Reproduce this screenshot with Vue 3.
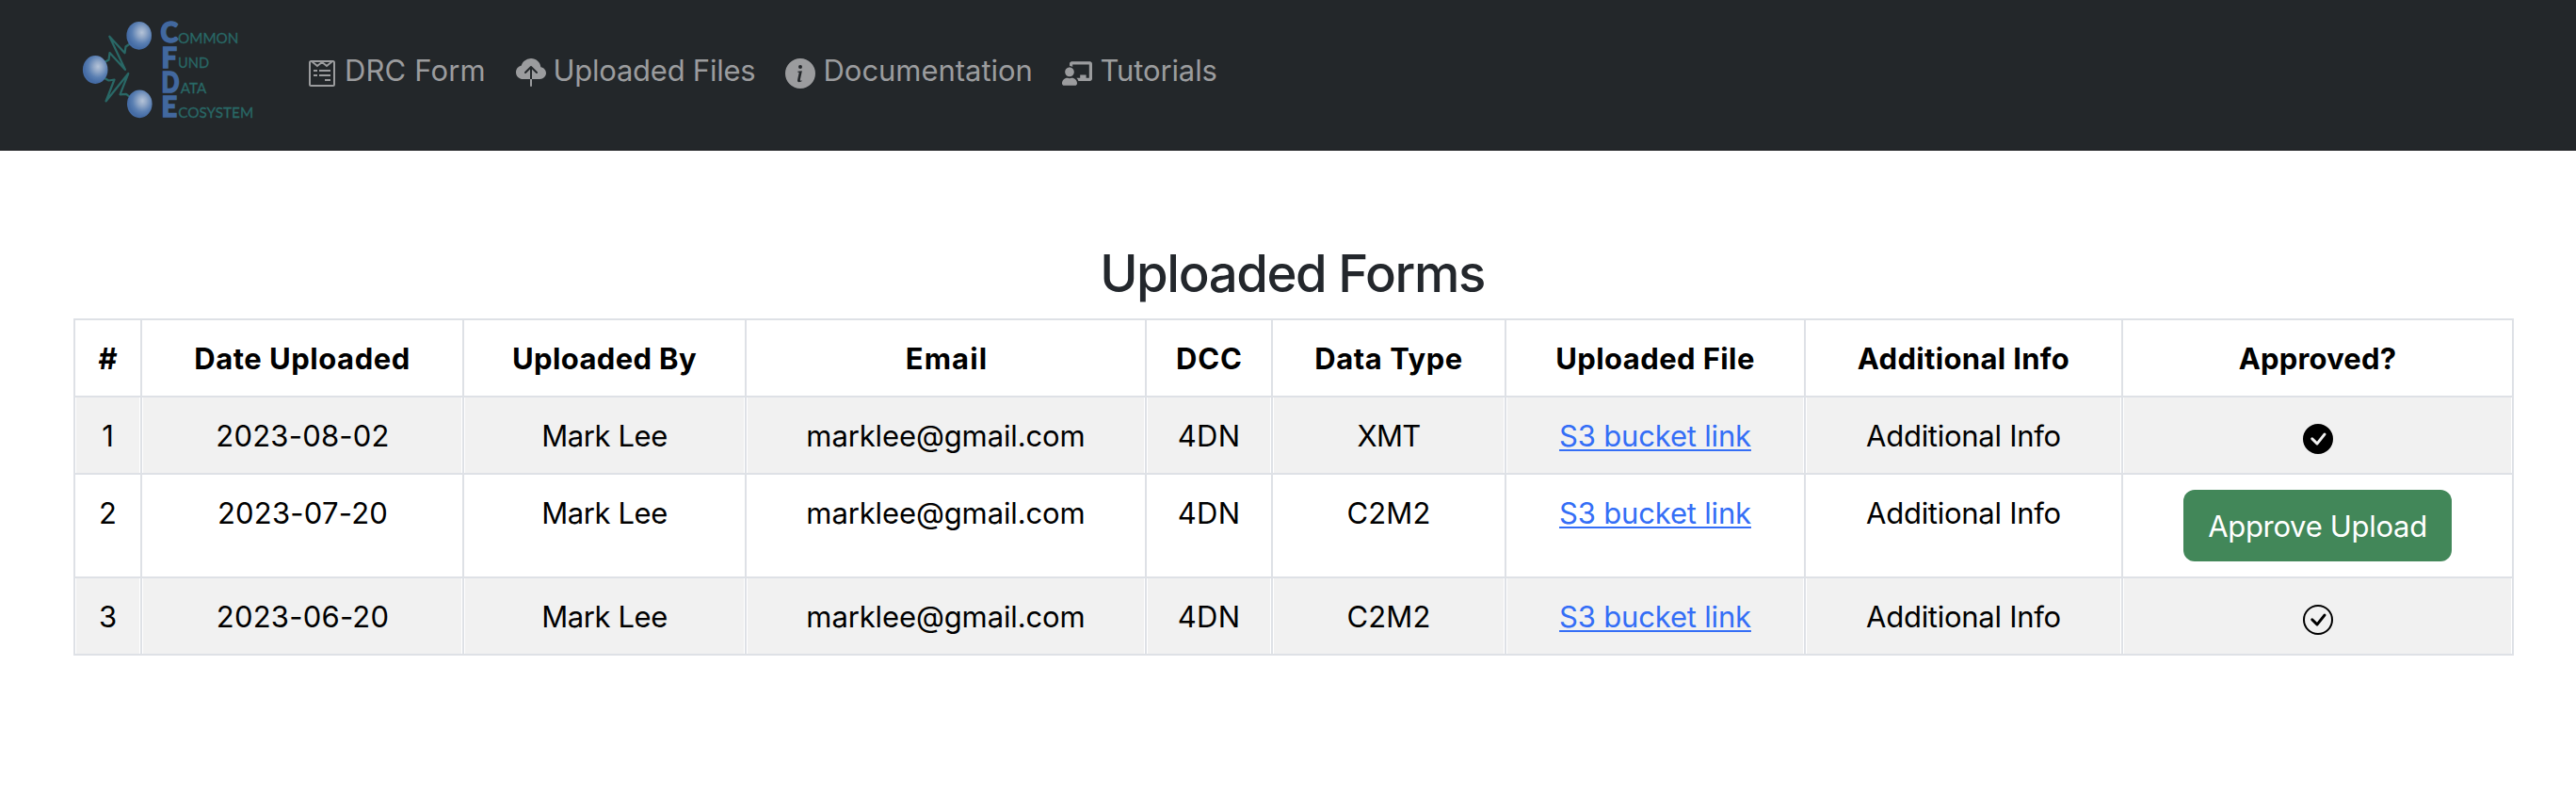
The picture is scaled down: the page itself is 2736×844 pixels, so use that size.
<script setup>
const navItems = [
  { key: 'form', label: 'DRC Form' },
  { key: 'files', label: 'Uploaded Files' },
  { key: 'docs', label: 'Documentation' },
  { key: 'tutorials', label: 'Tutorials' },
]

const columns = [
  { key: 'num', label: '#' },
  { key: 'date', label: 'Date Uploaded' },
  { key: 'by', label: 'Uploaded By' },
  { key: 'email', label: 'Email' },
  { key: 'dcc', label: 'DCC' },
  { key: 'type', label: 'Data Type' },
  { key: 'file', label: 'Uploaded File' },
  { key: 'info', label: 'Additional Info' },
  { key: 'approved', label: 'Approved?' },
]

const base = {
  by: 'Mark Lee',
  email: 'marklee@gmail.com',
  dcc: '4DN',
  file: 'S3 bucket link',
  info: 'Additional Info',
}
const rows = [
  { ...base, num: 1, date: '2023-08-02', type: 'XMT', status: 'approved' },
  { ...base, num: 2, date: '2023-07-20', type: 'C2M2', status: 'pending' },
  { ...base, num: 3, date: '2023-06-20', type: 'C2M2', status: 'checked' },
]
</script>

<template>
  <div class="page">
    <header class="navbar">
      <svg class="logo" width="200" height="142" viewBox="84 8 200 142">
        <defs>
          <radialGradient id="ball" cx="0.61" cy="0.39" r="0.56">
            <stop offset="0" stop-color="#b4c3d8" />
            <stop offset="0.3" stop-color="#93a9c8" />
            <stop offset="0.7" stop-color="#5a7fb2" />
            <stop offset="1" stop-color="#456ca5" />
          </radialGradient>
        </defs>
        <g fill="none" stroke="#296866" stroke-width="2.2" stroke-linejoin="round">
          <path d="M111 66 L115.5 63.5 L116.5 56 L133 74 L116.3 38.7 L132.5 56.3 L133.5 49.5 L138 46.5" />
          <path d="M111 83 L115.5 85.5 L121.5 84.5 L112.5 107.5 L136.3 78 L127.5 100.3 L134 99.8 L138 103" />
        </g>
        <g fill="url(#ball)">
          <ellipse cx="147.7" cy="37.8" rx="13.3" ry="14.9" />
          <ellipse cx="101.2" cy="74" rx="13.3" ry="14.9" />
          <ellipse cx="148.3" cy="110.3" rx="13.3" ry="14.9" />
        </g>
        <g class="initials">
          <text x="170.4" y="45.4" textLength="18.6" lengthAdjust="spacingAndGlyphs">C</text>
          <text x="171.6" y="71.8" textLength="16.4" lengthAdjust="spacingAndGlyphs">F</text>
          <text x="171.6" y="98.2" textLength="19" lengthAdjust="spacingAndGlyphs">D</text>
          <text x="171.6" y="124.4" textLength="16.6" lengthAdjust="spacingAndGlyphs">E</text>
        </g>
        <g class="words">
          <text x="189.1" y="46" textLength="64.3" lengthAdjust="spacingAndGlyphs">OMMON</text>
          <text x="189" y="72.4" textLength="33" lengthAdjust="spacingAndGlyphs">UND</text>
          <text x="191.8" y="98.8" textLength="27.4" lengthAdjust="spacingAndGlyphs">ATA</text>
          <text x="189.2" y="125" textLength="80" lengthAdjust="spacingAndGlyphs">COSYSTEM</text>
        </g>
      </svg>

      <nav class="nav">
        <a v-for="item in navItems" :key="item.key" class="nav-link" :class="item.key">
          <svg v-if="item.key === 'form'" class="icon" viewBox="0 0 32 32">
            <g fill="none" stroke="currentColor" stroke-width="2">
              <rect x="3" y="3" width="26" height="26" rx="1.5" />
              <path d="M5.5 3.5 L11 8 L16 4 L21 8 L26.5 3.5" />
              <path d="M7 13h4M13 13h12M7 18h4M13 18h12M19 23h6" />
            </g>
          </svg>
          <svg v-else-if="item.key === 'files'" class="icon" viewBox="0 0 16 16" fill="currentColor">
            <path fill-rule="evenodd" d="M8 0a5.53 5.53 0 0 0-3.594 1.342c-.766.66-1.321 1.52-1.464 2.383C1.266 4.095 0 5.555 0 7.318 0 9.366 1.708 11 3.781 11H7.5V5.707L5.354 7.854a.5.5 0 1 1-.708-.708l3-3a.5.5 0 0 1 .708 0l3 3a.5.5 0 0 1-.708.708L8.5 5.707V11h4.188C14.502 11 16 9.57 16 7.773c0-1.636-1.242-2.969-2.834-3.194C12.923 1.999 10.69 0 8 0m-.5 14.5V11h1v3.5a.5.5 0 0 1-1 0" />
          </svg>
          <svg v-else-if="item.key === 'docs'" class="icon" viewBox="0 0 16 16" fill="currentColor">
            <path d="M8 16A8 8 0 1 0 8 0a8 8 0 0 0 0 16m.93-9.412-1 4.705c-.07.34.029.533.304.533.194 0 .487-.07.686-.246l-.088.416c-.287.346-.92.598-1.465.598-.703 0-1.002-.422-.808-1.319l.738-3.468c.064-.293.006-.399-.287-.47l-.451-.081.082-.381 2.29-.287zM8 5.5a1 1 0 1 1 0-2 1 1 0 0 1 0 2" />
          </svg>
          <svg v-else class="icon" viewBox="0 0 640 512" fill="currentColor">
            <path d="M208 352c-2.39 0-4.78.35-7.06 1.09C187.98 357.3 174.35 360 160 360c-14.35 0-27.98-2.7-40.95-6.91-2.28-.74-4.66-1.09-7.05-1.09C49.94 352-.33 402.48 0 464.62.14 490.88 21.73 512 48 512h224c26.27 0 47.86-21.12 48-47.38.33-62.14-49.94-112.62-112-112.62zm-48-32c53.02 0 96-42.98 96-96s-42.98-96-96-96-96 42.98-96 96 42.98 96 96 96zM592 0H208c-26.47 0-48 22.25-48 49.59V96c23.42 0 45.1 6.78 64 17.8V64h352v288h-64v-64H384v64h-76.24c19.1 16.69 33.12 38.73 39.69 64H592c26.47 0 48-22.25 48-49.59V49.59C640 22.25 618.47 0 592 0z" />
          </svg>
          <span>{{ item.label }}</span>
        </a>
      </nav>
    </header>

    <main class="content">
      <h2 class="title">Uploaded Forms</h2>
      <table class="forms">
        <colgroup>
          <col v-for="c in columns" :key="c.key" :class="'col-' + c.key" />
        </colgroup>
        <thead>
          <tr>
            <th v-for="c in columns" :key="c.key" :class="'h-' + c.key">{{ c.label }}</th>
          </tr>
        </thead>
        <tbody>
          <tr v-for="r in rows" :key="r.num">
            <td>{{ r.num }}</td>
            <td class="c-date">{{ r.date }}</td>
            <td class="c-by">{{ r.by }}</td>
            <td class="c-email">{{ r.email }}</td>
            <td class="c-dcc">{{ r.dcc }}</td>
            <td :class="'c-' + r.type.toLowerCase()">{{ r.type }}</td>
            <td class="c-file"><a class="link">{{ r.file }}</a></td>
            <td class="c-info">{{ r.info }}</td>
            <td class="c-approved">
              <button v-if="r.status === 'pending'" class="approve">Approve Upload</button>
              <div v-else class="mark">
                <svg v-if="r.status === 'approved'" width="32" height="32" viewBox="0 0 16 16">
                  <path d="M16 8A8 8 0 1 1 0 8a8 8 0 0 1 16 0m-3.97-3.03a.75.75 0 0 0-1.08.022L7.477 9.417 5.384 7.323a.75.75 0 0 0-1.06 1.06L6.97 11.03a.75.75 0 0 0 1.079-.02l3.992-4.99a.75.75 0 0 0-.01-1.05z" />
                </svg>
                <svg v-else width="32" height="32" viewBox="0 0 16 16">
                  <path d="M8 15A7 7 0 1 1 8 1a7 7 0 0 1 0 14m0 1A8 8 0 1 0 8 0a8 8 0 0 0 0 16" />
                  <path d="m10.97 4.97-.02.022-3.473 4.425-2.093-2.094a.75.75 0 0 0-1.06 1.06L6.97 11.03a.75.75 0 0 0 1.079-.02l3.992-4.99a.75.75 0 0 0-1.071-1.05" />
                </svg>
              </div>
            </td>
          </tr>
        </tbody>
      </table>
    </main>
  </div>
</template>

<style>
body {
  margin: 0;
  background: #fff;
}
</style>

<style scoped>
.page {
  min-height: 844px;
  font-family: Inter, "Liberation Sans", sans-serif;
  font-size: 31px;
  line-height: 48px;
  color: #000;
}
.navbar {
  box-sizing: border-box;
  height: 160px;
  display: flex;
  align-items: flex-start;
  padding: 8px 0 0 84px;
  background: #23272a;
  border-bottom: 1px solid #1d1e22;
}
.logo {
  flex: none;
}
.initials {
  font: 900 30px Lato, sans-serif;
  fill: #42689f;
  stroke: #42689f;
  stroke-width: 1.5px;
}
.words {
  font: 400 16.2px Lato, sans-serif;
  fill: #296866;
  stroke: #296866;
  stroke-width: 0.3px;
}
.nav {
  display: flex;
  margin: 43px 0 0 42px;
  color: #9b9c9e;
}
.nav-link {
  display: flex;
  gap: 8px;
  white-space: nowrap;
}
.icon {
  flex: none;
  width: 32px;
  height: 32px;
  margin-top: 11px;
}
.form {
  width: 222px;
  letter-spacing: 0.13px;
}
.files {
  width: 286px;
  gap: 7.5px;
  letter-spacing: -0.25px;
}
.docs {
  width: 294px;
  gap: 8.5px;
  letter-spacing: -0.04px;
}
.tutorials {
  gap: 8.5px;
  letter-spacing: -0.13px;
}
.content {
  display: flex;
  flex-direction: column;
  padding: 97px 66px 0 78px;
}
.title {
  margin: 0 0 14px;
  padding-right: 3px;
  font-size: 54.5px;
  line-height: 67px;
  font-weight: 500;
  letter-spacing: -1.43px;
  text-align: center;
  color: #23272c;
}
.forms {
  width: 2592px;
  table-layout: fixed;
  border-collapse: collapse;
}
.col-num { width: 71px; }
.col-date { width: 342px; }
.col-by { width: 300px; }
.col-email { width: 425px; }
.col-dcc { width: 134px; }
.col-type { width: 248px; }
.col-file { width: 318px; }
.col-info { width: 337px; }
.col-approved { width: 415px; }
th,
td {
  height: 48px;
  padding: 17px 0 15px;
  border: 2px solid #dee1e6;
  text-align: center;
  vertical-align: top;
  white-space: nowrap;
}
.c-approved {
  padding: 16px 0;
}
th {
  font-weight: 700;
}
tbody tr:nth-child(odd) td {
  background: #f1f1f1;
  box-shadow: inset 1px 0 #fff, inset -1px 0 #fff;
}
.h-date { letter-spacing: 0.52px; }
.h-by { letter-spacing: 0.37px; }
.h-email { letter-spacing: 1.1px; padding-left: 2px; }
.h-dcc { letter-spacing: 0.84px; padding-left: 1px; }
.h-type { letter-spacing: 0.54px; }
.h-file { letter-spacing: 0.4px; }
.h-info { letter-spacing: 0.33px; }
.h-approved { letter-spacing: 0.18px; }
.c-date { letter-spacing: 0.22px; padding-left: 1px; }
.c-by { letter-spacing: -0.41px; }
.c-email { letter-spacing: -0.12px; }
.c-dcc { letter-spacing: 0.3px; }
.c-xmt { letter-spacing: -0.8px; }
.c-c2m2 { letter-spacing: 0.15px; }
.c-file { letter-spacing: -0.18px; }
.c-info { letter-spacing: -0.27px; }
.link {
  color: #346ef6;
  text-decoration: underline;
  text-decoration-thickness: 2px;
  text-underline-offset: 3px;
  text-decoration-skip-ink: none;
}
.approve {
  display: block;
  box-sizing: border-box;
  width: 285px;
  height: 76px;
  margin: 0 auto;
  padding: 1px 0 0;
  border: 0;
  border-radius: 12px;
  background: #428759;
  color: #fff;
  font: inherit;
  letter-spacing: -0.3px;
}
.mark {
  display: flex;
  justify-content: center;
  height: 36px;
  padding-top: 12px;
}
</style>
